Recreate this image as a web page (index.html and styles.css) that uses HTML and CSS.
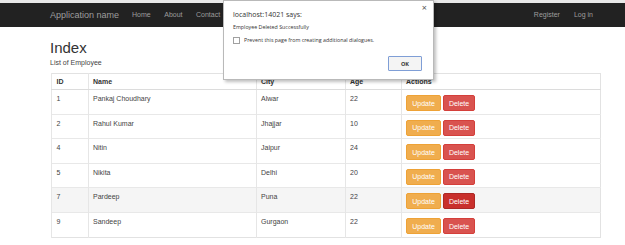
FILE: index.html
```html
<!DOCTYPE html>
<html lang="en">
<head>
    <meta charset="UTF-8">
    <title>Index - Application name</title>
    <link rel="stylesheet" href="styles.css">
</head>
<body>
    <nav class="navbar">
        <a class="brand" href="#">Application name</a>
        <ul class="nav-links">
            <li><a href="#">Home</a></li>
            <li><a href="#">About</a></li>
            <li><a href="#">Contact</a></li>
        </ul>
        <ul class="nav-links nav-right">
            <li><a href="#">Register</a></li>
            <li><a href="#">Log in</a></li>
        </ul>
    </nav>

    <div class="container">
        <h1>Index</h1>
        <p class="subtitle">List of Employee</p>

        <table class="employees">
            <colgroup>
                <col class="col-id">
                <col class="col-name">
                <col class="col-city">
                <col class="col-age">
                <col class="col-actions">
            </colgroup>
            <thead>
                <tr>
                    <th>ID</th>
                    <th>Name</th>
                    <th>City</th>
                    <th>Age</th>
                    <th>Actions</th>
                </tr>
            </thead>
            <tbody>
                <tr>
                    <td>1</td><td>Pankaj Choudhary</td><td>Alwar</td><td>22</td>
                    <td><button class="btn btn-update">Update</button><button class="btn btn-delete">Delete</button></td>
                </tr>
                <tr>
                    <td>2</td><td>Rahul Kumar</td><td>Jhajjar</td><td>10</td>
                    <td><button class="btn btn-update">Update</button><button class="btn btn-delete">Delete</button></td>
                </tr>
                <tr>
                    <td>4</td><td>Nitin</td><td>Jaipur</td><td>24</td>
                    <td><button class="btn btn-update">Update</button><button class="btn btn-delete">Delete</button></td>
                </tr>
                <tr>
                    <td>5</td><td>Nikita</td><td>Delhi</td><td>20</td>
                    <td><button class="btn btn-update">Update</button><button class="btn btn-delete">Delete</button></td>
                </tr>
                <tr class="hovered">
                    <td>7</td><td>Pardeep</td><td>Puna</td><td>22</td>
                    <td><button class="btn btn-update">Update</button><button class="btn btn-delete active">Delete</button></td>
                </tr>
                <tr>
                    <td>9</td><td>Sandeep</td><td>Gurgaon</td><td>22</td>
                    <td><button class="btn btn-update">Update</button><button class="btn btn-delete">Delete</button></td>
                </tr>
            </tbody>
        </table>
    </div>

    <!-- browser alert shown after delete -->
    <div class="alert-dialog">
        <span class="alert-close">&times;</span>
        <div class="alert-title">localhost:14021 says:</div>
        <div class="alert-message">Employee Deleted Successfully</div>
        <label class="alert-check">
            <span class="checkbox"></span>
            Prevent this page from creating additional dialogues.
        </label>
        <div class="alert-actions">
            <button class="alert-ok">OK</button>
        </div>
    </div>
</body>
</html>
```

FILE: styles.css
```css
body {
    margin: 0;
    font-family: "Liberation Sans", Arial, sans-serif;
    font-size: 7px;
    line-height: 10px;
    color: #444;
    background: #fff;
}
a {
    text-decoration: none;
}
.navbar {
    display: flex;
    align-items: center;
    height: 24px;
    border-top: 3px solid #e9e9e9;
    background-color: #222;
    padding: 0 32px 0 50px;
}
.brand {
    font-size: 9px;
    color: #9d9d9d;
    margin-right: 13px;
}
.nav-links {
    display: flex;
    gap: 13.5px;
    list-style: none;
    margin: 0;
    padding: 0;
}
.nav-links a {
    color: #9d9d9d;
    font-size: 7px;
}
.nav-right {
    margin-left: auto;
    gap: 14px;
}
.container {
    margin-left: 51px;
    width: 549px;
}
h1 {
    font-size: 15px;
    font-weight: normal;
    line-height: 17px;
    color: #333;
    margin: 11.5px 0 2px -1px;
}
.subtitle {
    margin: 0 0 5px -1px;
}
.employees {
    width: 549px;
    table-layout: fixed;
    border-collapse: collapse;
    border: 1px solid #e2e2e2;
}
.col-id { width: 37px; }
.col-name { width: 168px; }
.col-city { width: 89px; }
.col-age { width: 56px; }
.col-actions { width: 199px; }
.employees th,
.employees td {
    text-align: left;
    vertical-align: top;
    border-left: 1px solid #e6e6e6;
}
.employees th {
    font-weight: bold;
    color: #333;
    padding: 3px 4px 2.6px;
    border-bottom: 1px solid #dcdcdc;
}
.employees td {
    padding: 4px 4px 2.6px;
    border-top: 1px solid #e8e8e8;
}
.employees th:first-child,
.employees td:first-child {
    padding-left: 4.5px;
}
.employees tr.hovered td {
    background-color: #f5f5f5;
}
.btn {
    font-family: "Liberation Sans", Arial, sans-serif;
    font-size: 7px;
    color: #fff;
    height: 16px;
    padding: 0;
    border-radius: 2px;
    border: 1px solid transparent;
    margin: 1px 2px 0 0;
    cursor: pointer;
    vertical-align: top;
}
.btn-update {
    width: 35px;
    background-color: #f0ad4e;
    border-color: #eea236;
}
.btn-delete {
    width: 32px;
    background-color: #d9534f;
    border-color: #d43f3a;
}
.btn-delete.active {
    background-color: #c9302c;
    border-color: #ac2925;
}
.alert-dialog {
    position: absolute;
    left: 223px;
    top: 0;
    width: 211px;
    height: 80px;
    background: #fff;
    border: 1px solid #b9b9b9;
    box-shadow: 2px 2px 3px rgba(0, 0, 0, 0.25);
    font-family: "Open Sans", "Liberation Sans", sans-serif;
    color: #333;
    padding: 8px 0 0 9px;
    box-sizing: border-box;
}
.alert-close {
    position: absolute;
    right: 6px;
    top: 2px;
    font-size: 9px;
    color: #555;
}
.alert-title {
    font-size: 7px;
    line-height: 12px;
}
.alert-message {
    font-size: 5.3px;
    line-height: 8px;
    margin-top: 2px;
}
.alert-check {
    display: flex;
    align-items: center;
    gap: 4px;
    font-size: 5.3px;
    line-height: 8px;
    margin-top: 5px;
}
.checkbox {
    width: 5px;
    height: 5px;
    border: 1px solid #a0a0a0;
    background: #fff;
}
.alert-actions {
    display: flex;
    justify-content: flex-end;
    padding-right: 11px;
    margin-top: 12px;
}
.alert-ok {
    width: 34px;
    height: 15px;
    padding: 0;
    font-family: "Open Sans", "Liberation Sans", sans-serif;
    font-size: 5.5px;
    font-weight: bold;
    color: #333;
    background: #f4f4f4;
    border: 1px solid #7f9ed6;
    border-radius: 1px;
}
```
